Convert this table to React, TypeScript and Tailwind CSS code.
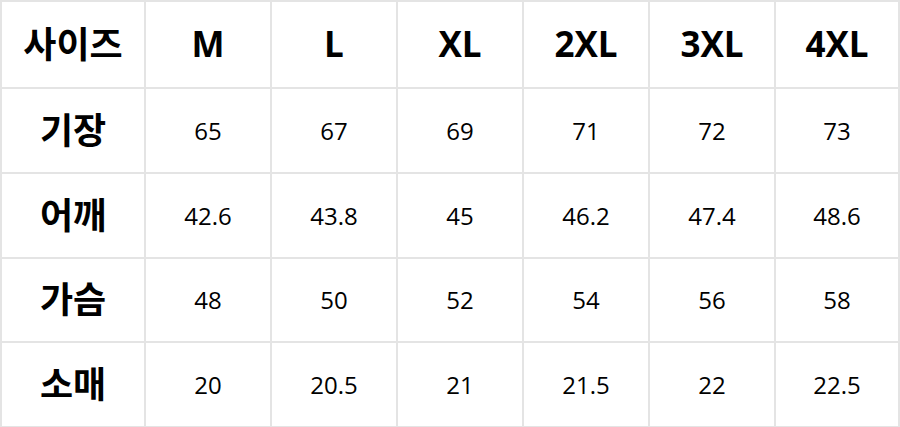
import React from 'react';

const sizes = ['M', 'L', 'XL', '2XL', '3XL', '4XL'];

const rows: { label: string; values: string[] }[] = [
    { label: '기장', values: ['65', '67', '69', '71', '72', '73'] },
    { label: '어깨', values: ['42.6', '43.8', '45', '46.2', '47.4', '48.6'] },
    { label: '가슴', values: ['48', '50', '52', '54', '56', '58'] },
    { label: '소매', values: ['20', '20.5', '21', '21.5', '22', '22.5'] },
];

const font = { fontFamily: '"Open Sans", "Noto Sans CJK KR", sans-serif' };

const App = () => {
    return (
        <div className='w-[900px] h-[427px] bg-white' style={font}>
            <div className='grid grid-cols-[142px_repeat(5,124px)_1fr] grid-rows-[85px_83px_83px_82px_83px] gap-[2px] p-[2px] bg-[#e4e4e4] w-[900px] text-black'>
                {/* Header row */}
                <div className='bg-white flex items-center justify-center text-[36px] font-bold'>사이즈</div>
                {sizes.map((s) => (
                    <div key={s} className='bg-white flex items-center justify-center text-[35px] font-bold'>
                        {s}
                    </div>
                ))}

                {/* Body rows */}
                {rows.map((r) => (
                    <React.Fragment key={r.label}>
                        <div className='bg-white flex items-center justify-center text-[36px] font-bold'>{r.label}</div>
                        {r.values.map((v, i) => (
                            <div key={i} className='bg-white flex items-center justify-center text-[24px]'>
                                {v}
                            </div>
                        ))}
                    </React.Fragment>
                ))}
            </div>
        </div>
    );
};

export default App;
